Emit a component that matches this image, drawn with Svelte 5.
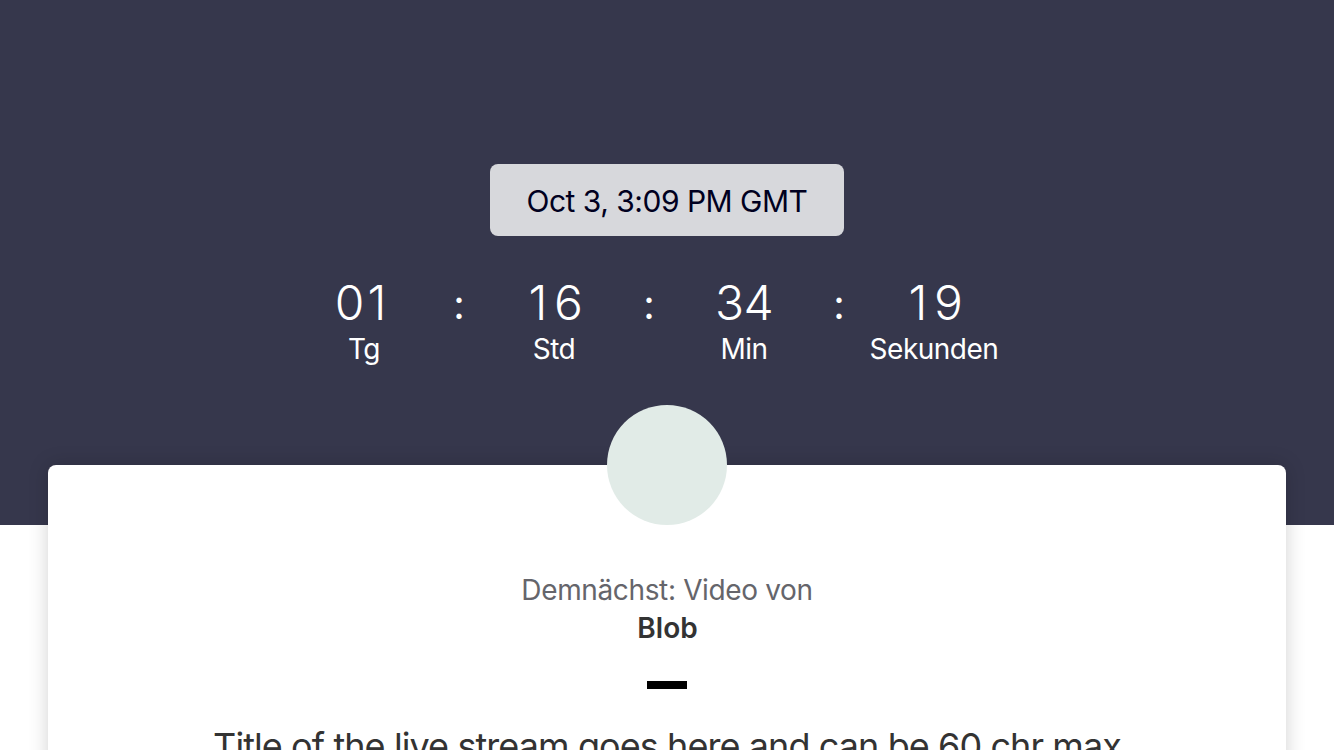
<script>
  const units = [
    { value: '01', label: 'Tg' },
    { value: '16', label: 'Std' },
    { value: '34', label: 'Min' },
    { value: '19', label: 'Sekunden' }
  ];
</script>

<main class="page">
  <section class="hero">
    <div class="date"><span>Oct 3, 3:09 PM GMT</span></div>
    <div class="countdown">
      {#each units as unit, i}
        {#if i > 0}<span class="colon">:</span>{/if}
        <div class="unit">
          <span class="value">{#each unit.value as digit}<span class="digit" class:one={digit === '1'}>{digit}</span>{/each}</span>
          <span class="label">{unit.label}</span>
        </div>
      {/each}
    </div>
  </section>
  <article class="card">
    <div class="avatar"></div>
    <p class="intro">Demnächst: Video von</p>
    <p class="name">Blob</p>
    <div class="rule"></div>
    <h1 class="title">Title of the live stream goes here and can be 60 chr max</h1>
  </article>
</main>

<style>
  .page {
    height: 750px;
    overflow: hidden;
    background: #fff;
    font-family: Inter, sans-serif;
  }
  .hero {
    height: 525px;
    box-sizing: border-box;
    padding-top: 164px;
    background: #36374c;
    display: flex;
    flex-direction: column;
    align-items: center;
  }
  .date {
    width: 354px;
    height: 72px;
    border-radius: 8px;
    background: #d7d8dc;
    color: #000020;
    font-size: 30px;
    line-height: 75px;
    letter-spacing: -0.5px;
    text-align: center;
    white-space: nowrap;
  }
  .countdown {
    display: grid;
    grid-template-columns: 130px 60px 130px 60px 130px 60px 130px;
    margin-top: 39px;
    margin-right: 36px;
    color: #fff;
    text-align: center;
  }
  .unit {
    display: flex;
    flex-direction: column;
  }
  .value {
    display: flex;
    justify-content: center;
    font-size: 48px;
    line-height: 56px;
    font-weight: 300;
  }
  .digit {
    box-sizing: border-box;
    width: 29px;
    display: flex;
    justify-content: center;
  }
  .one {
    padding-right: 3px;
  }
  .label {
    font-size: 28px;
    line-height: 36px;
    letter-spacing: -0.5px;
    white-space: nowrap;
  }
  .colon {
    font-family: Lato, sans-serif;
    font-size: 42px;
    line-height: 57px;
    font-weight: 400;
  }
  .card {
    height: 500px;
    margin: -60px 48px 0;
    border-radius: 8px;
    background: #fff;
    box-shadow: 0 0 20px rgba(0, 0, 0, 0.18);
    position: relative;
    display: flex;
    flex-direction: column;
    align-items: center;
  }
  .avatar {
    width: 120px;
    height: 120px;
    margin-top: -60px;
    border-radius: 50%;
    background: #e1ebe7;
  }
  p, h1 {
    margin: 0;
    white-space: nowrap;
  }
  .intro {
    margin-top: 46px;
    color: #65656b;
    font-size: 28px;
    line-height: 38px;
    letter-spacing: -0.36px;
  }
  .name {
    padding-left: 1px;
    color: #333;
    font-size: 28px;
    line-height: 38px;
    font-weight: 600;
  }
  .rule {
    width: 40px;
    height: 8px;
    margin-top: 34px;
    background: #000;
  }
  .title {
    margin-top: 33px;
    color: #333;
    font-size: 36px;
    line-height: 48px;
    font-weight: 400;
    letter-spacing: -0.92px;
  }
</style>
